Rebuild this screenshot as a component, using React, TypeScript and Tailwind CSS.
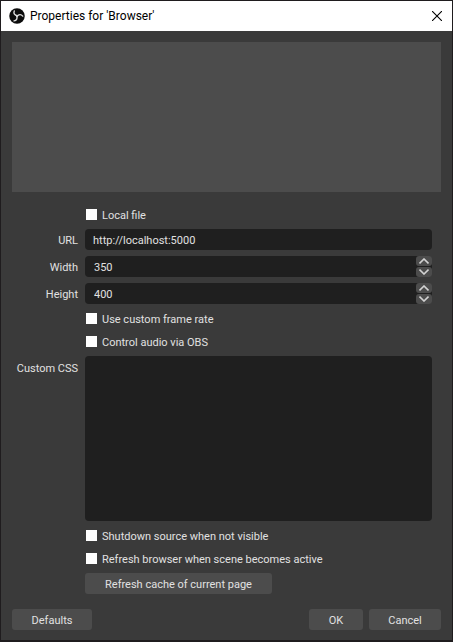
import React, { useState } from "react";

function ObsLogo() {
  return (
    <svg viewBox="0 0 32 32" className="h-4 w-4 shrink-0" aria-hidden="true">
      <circle cx="16" cy="16" r="15.5" fill="#0c0c0c" />
      <g fill="none" stroke="#dedede" strokeWidth="2.8" strokeLinecap="round">
        <path d="M10.500 6C8.500 11 11.500 15 16.500 15.500" />
        <path d="M10.500 6C8.500 11 11.500 15 16.500 15.500" transform="rotate(120 16 16)" />
        <path d="M10.500 6C8.500 11 11.500 15 16.500 15.500" transform="rotate(240 16 16)" />
      </g>
    </svg>
  );
}

function CheckRow({ id, label }: { id: string; label: string }) {
  return (
    <div className="col-start-2 flex h-[17px] items-center gap-[5px] pl-px">
      <input
        id={id}
        type="checkbox"
        className="h-[11px] w-[11px] shrink-0 appearance-none bg-white checked:bg-[#5b8fd6]"
      />
      <label htmlFor={id} className="pt-0.5">
        {label}
      </label>
    </div>
  );
}

function StepButton({ up, label, onClick }: { up?: boolean; label: string; onClick: () => void }) {
  return (
    <button
      type="button"
      aria-label={label}
      onClick={onClick}
      className="flex h-[10px] w-4 items-center justify-center rounded-[3px] bg-[#4c4c4c]"
    >
      <svg viewBox="0 0 10 6" className="h-[6px] w-[10px]" fill="none" stroke="#d2d2d2" strokeWidth="1.6">
        <path d={up ? "M0.500 5.400L5 1L9.500 5.400" : "M0.500 0.600L5 5L9.500 0.600"} />
      </svg>
    </button>
  );
}

function NumberRow({ id, label, initial }: { id: string; label: string; initial: number }) {
  const [value, setValue] = useState(initial);
  return (
    <>
      <label htmlFor={id} className="pt-[3px] pr-px text-right">
        {label}
      </label>
      <div className="flex h-[21px] rounded bg-[#1f1f1f]">
        <input
          id={id}
          type="text"
          inputMode="numeric"
          value={value}
          onChange={(e) => setValue(Number(e.target.value) || 0)}
          className="min-w-0 flex-1 bg-transparent pt-0.5 pl-[9px] outline-none"
        />
        <div className="flex flex-col justify-between">
          <StepButton up label={`Increase ${label}`} onClick={() => setValue(value + 1)} />
          <StepButton label={`Decrease ${label}`} onClick={() => setValue(value - 1)} />
        </div>
      </div>
    </>
  );
}

function PushButton({ className, children }: { className: string; children: React.ReactNode }) {
  return (
    <button type="button" className={`h-[21px] rounded-[3px] bg-[#4c4c4c] pt-0.5 ${className}`}>
      {children}
    </button>
  );
}

export default function App() {
  return (
    <main className="flex min-h-screen flex-col border border-b-2 border-[#1f1c1e] bg-[#3a3a3a] font-['Roboto','Noto_Sans',sans-serif] text-[11px] leading-[17px] text-[#e1e1e1]">
      <header className="flex h-[30px] items-center bg-white pr-[10px] pl-2 text-black">
        <ObsLogo />
        <h1 className="ml-[5px] flex-1 text-[12px]">Properties for 'Browser'</h1>
        <button type="button" aria-label="Close">
          <svg viewBox="0 0 10 10" className="h-[10px] w-[10px]" stroke="#000" strokeWidth="1.1">
            <path d="M0 0L10 10M10 0L0 10" />
          </svg>
        </button>
      </header>

      <div className="flex flex-1 flex-col px-[11px] pt-[11px] pb-[10px]">
        <div className="h-[150px] bg-[#4c4c4c]" />

        <form className="mt-[14px] mr-[9px] grid grid-cols-[67px_minmax(0,1fr)] gap-1.5">
          <CheckRow id="local-file" label="Local file" />

          <label htmlFor="url" className="pt-[3px] pr-px text-right">
            URL
          </label>
          <input
            id="url"
            type="text"
            defaultValue="http://localhost:5000"
            className="h-[21px] w-full rounded bg-[#1f1f1f] px-2 pt-0.5 outline-none"
          />

          <NumberRow id="width" label="Width" initial={350} />
          <NumberRow id="height" label="Height" initial={400} />

          <CheckRow id="frame-rate" label="Use custom frame rate" />
          <CheckRow id="audio" label="Control audio via OBS" />

          <label htmlFor="css" className="pt-1 pr-px text-right">
            Custom CSS
          </label>
          <textarea
            id="css"
            className="block h-[165px] w-full resize-none rounded bg-[#1f1f1f] px-2 py-1 outline-none"
          />

          <CheckRow id="shutdown" label="Shutdown source when not visible" />
          <CheckRow id="refresh" label="Refresh browser when scene becomes active" />

          <PushButton className="col-start-2 w-[187px]">Refresh cache of current page</PushButton>
        </form>

        <footer className="mt-auto flex gap-1.5">
          <PushButton className="mr-auto w-20">Defaults</PushButton>
          <PushButton className="w-[54px]">OK</PushButton>
          <PushButton className="w-[72px]">Cancel</PushButton>
        </footer>
      </div>
    </main>
  );
}
